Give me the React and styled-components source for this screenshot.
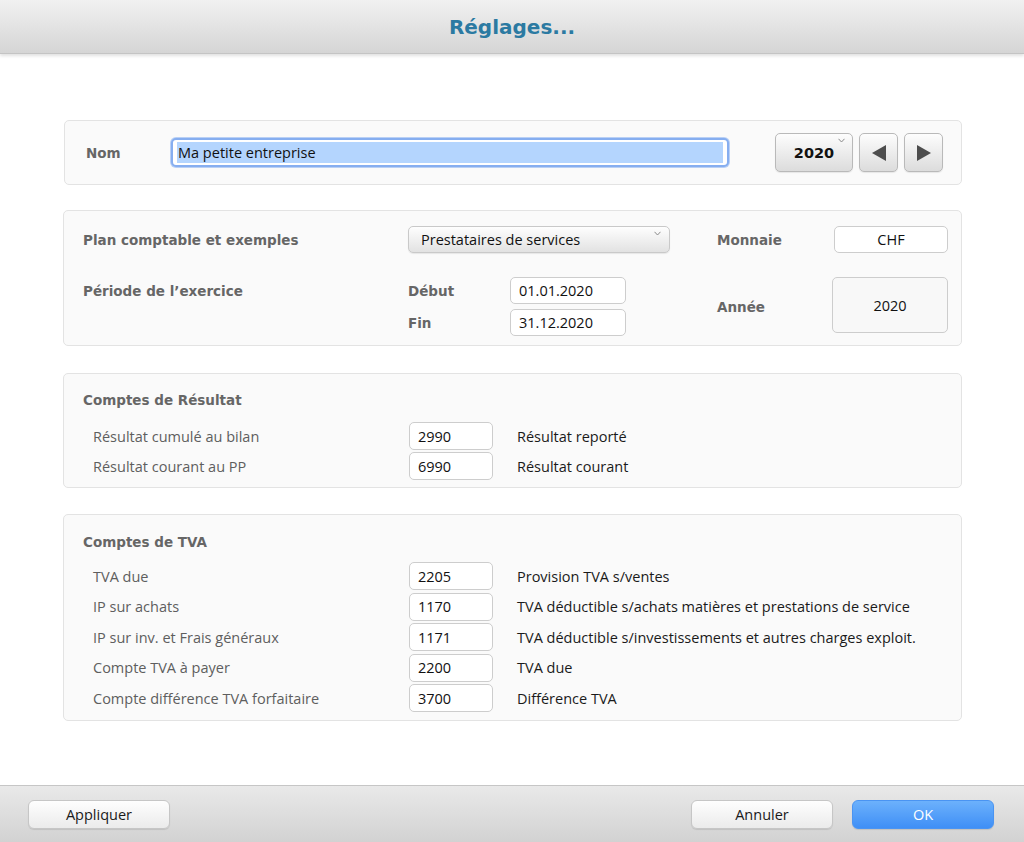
import React from "react";
import styled, { createGlobalStyle } from "styled-components";

const Global = createGlobalStyle`
  html, body { margin: 0; padding: 0; background: #ffffff; }
  body { font-family: "Open Sans", Lato, sans-serif; }
  * { box-sizing: border-box; }
`;

const Window = styled.div`
  width: 1024px;
  height: 842px;
  display: flex;
  flex-direction: column;
  background: #ffffff;
  overflow: hidden;
`;

const TitleBar = styled.header`
  height: 54px;
  flex: none;
  display: flex;
  align-items: center;
  justify-content: center;
  background: linear-gradient(#f1f1f1, #d5d5d5);
  border-bottom: 1px solid #c4c4c4;
  box-shadow: 0 2px 3px rgba(0, 0, 0, 0.12);
  position: relative;
  z-index: 1;
`;

const Title = styled.h1`
  margin: 0;
  font-family: "DejaVu Sans", Verdana, sans-serif;
  font-weight: bold;
  font-size: 20px;
  color: #2b7aa2;
`;

const Content = styled.main`
  flex: 1;
  padding: 66px 62px 0 63px;
  display: flex;
  flex-direction: column;
  gap: 25px;
`;

const Panel = styled.section`
  background: #fafafa;
  border: 1px solid #e3e3e3;
  border-radius: 5px;
  padding: ${(p) => p.$pad};
  width: ${(p) => p.$width || "899px"};
  margin-top: ${(p) => p.$mt || "0"};
  margin-left: ${(p) => p.$ml || "0"};
`;

const BoldLabel = styled.span`
  font-family: "DejaVu Sans", Verdana, sans-serif;
  font-weight: bold;
  font-size: 13.5px;
  color: #666666;
  white-space: nowrap;
`;

/* Panel 1 */
const NameRow = styled.div`
  display: flex;
  align-items: center;
  height: 63px;
`;

const NameLabel = styled(BoldLabel)`
  width: 85px;
`;

const NameField = styled.div`
  width: 558px;
  height: 29px;
  border: 2px solid #86aef0;
  border-radius: 5px;
  background: #ffffff;
  padding: 2px 4px;
  box-shadow: 0 0 0 1px #b9d0f5;
`;

const Selection = styled.div`
  height: 100%;
  background: #b4d5fe;
  font-size: 14.5px;
  color: #111;
  line-height: 21px;
  padding-left: 1px;
`;

const YearNav = styled.div`
  margin-left: auto;
  display: flex;
  gap: 6px;
`;

const BevelButton = styled.button`
  position: relative;
  height: 39px;
  width: ${(p) => p.$w}px;
  border: 1px solid #b9b9b9;
  border-radius: 5px;
  background: linear-gradient(#fdfdfd, #dcdcdc);
  box-shadow: 0 1px 1px rgba(0, 0, 0, 0.08);
  display: flex;
  align-items: center;
  justify-content: center;
  padding: 0;
  font-family: "DejaVu Sans", Verdana, sans-serif;
  font-weight: bold;
  font-size: 14.5px;
  color: #111;
`;

const SmallChevron = styled.span`
  position: absolute;
  top: 4px;
  right: ${(p) => p.$r || 8}px;
  width: 7px;
  height: 5px;
  svg { display: block; }
`;

const Chevron = ({ r }) => (
  <SmallChevron $r={r}>
    <svg width="7" height="5" viewBox="0 0 7 5">
      <path d="M0.5 0.8 L3.5 4 L6.5 0.8" fill="none" stroke="#8a8a8a" strokeWidth="1" />
    </svg>
  </SmallChevron>
);

const Triangle = ({ dir }) => (
  <svg width="16" height="18" viewBox="0 0 16 18">
    {dir === "left" ? (
      <path d="M15 1 L15 17 L1 9 Z" fill="#4d4d4d" />
    ) : (
      <path d="M1 1 L1 17 L15 9 Z" fill="#4d4d4d" />
    )}
  </svg>
);

/* Panel 2 */
const SetupGrid = styled.div`
  display: grid;
  grid-template-columns: 325px 102px 116px 91px 115px 116px;
  grid-template-rows: 46px 27px 27px;
  row-gap: 5px;
  align-items: center;
`;

const Cell = styled.div`
  grid-column: ${(p) => p.$col};
  grid-row: ${(p) => p.$row};
  align-self: ${(p) => p.$align || "center"};
  display: flex;
  align-items: center;
  justify-content: ${(p) => p.$justify || "flex-start"};
  height: ${(p) => (p.$h ? p.$h + "px" : "auto")};
`;

const Select = styled.div`
  position: relative;
  width: 262px;
  height: 27px;
  border: 1px solid #c9c9c9;
  border-radius: 5px;
  background: linear-gradient(#fefefe, #e2e2e2);
  box-shadow: 0 1px 1px rgba(0, 0, 0, 0.08);
  padding-left: 12px;
  display: flex;
  align-items: center;
  font-size: 14.5px;
  color: #111;
`;

const TextBox = styled.div`
  width: ${(p) => p.$w}px;
  height: ${(p) => p.$h || 27}px;
  border: 1px solid #cdcdcd;
  border-radius: 5px;
  background: ${(p) => p.$bg || "#ffffff"};
  display: flex;
  align-items: center;
  justify-content: ${(p) => (p.$center ? "center" : "flex-start")};
  padding-left: ${(p) => (p.$center ? 0 : 8)}px;
  font-size: 14.5px;
  color: #111;
`;

/* Account panels */
const PanelTitle = styled(BoldLabel)`
  display: block;
  line-height: 18px;
`;

const Rows = styled.div`
  display: flex;
  flex-direction: column;
  gap: ${(p) => p.$gap}px;
  margin-top: ${(p) => p.$mt}px;
`;

const AccountRow = styled.div`
  display: grid;
  grid-template-columns: 316px 84px 1fr;
  align-items: center;
  padding-left: 10px;
  height: 28px;
`;

const RowLabel = styled.span`
  font-size: 14.5px;
  color: #5e5e5e;
  white-space: nowrap;
`;

const RowDesc = styled.span`
  font-size: 14.5px;
  color: #1a1a1a;
  padding-left: 24px;
  white-space: nowrap;
`;

/* Footer */
const Footer = styled.footer`
  height: 57px;
  flex: none;
  display: flex;
  align-items: center;
  padding: 0 30px 0 28px;
  gap: 19px;
  background: linear-gradient(#e9e9e9, #d2d2d2);
  border-top: 1px solid #c6c6c6;
`;

const FooterButton = styled.button`
  width: 142px;
  height: 29px;
  border-radius: 6px;
  border: 1px solid ${(p) => (p.$primary ? "#4a94f2" : "#c6c6c6")};
  background: ${(p) =>
    p.$primary ? "linear-gradient(#6cb1fc, #3f8ff6)" : "linear-gradient(#fefefe, #ebebeb)"};
  color: ${(p) => (p.$primary ? "#ffffff" : "#1a1a1a")};
  font-family: "Open Sans", Lato, sans-serif;
  font-size: 14.5px;
  box-shadow: 0 1px 1px rgba(0, 0, 0, 0.1);
  margin-left: ${(p) => (p.$push ? "auto" : "0")};
  padding: 0;
`;

const resultRows = [
  ["Résultat cumulé au bilan", "2990", "Résultat reporté"],
  ["Résultat courant au PP", "6990", "Résultat courant"],
];

const tvaRows = [
  ["TVA due", "2205", "Provision TVA s/ventes"],
  ["IP sur achats", "1170", "TVA déductible s/achats matières et prestations de service"],
  ["IP sur inv. et Frais généraux", "1171", "TVA déductible s/investissements et autres charges exploit."],
  ["Compte TVA à payer", "2200", "TVA due"],
  ["Compte différence TVA forfaitaire", "3700", "Différence TVA"],
];

const AccountList = ({ rows, gap, mt }) => (
  <Rows $gap={gap} $mt={mt}>
    {rows.map(([label, num, desc]) => (
      <AccountRow key={label}>
        <RowLabel>{label}</RowLabel>
        <TextBox $w={84} $h={28}>{num}</TextBox>
        <RowDesc>{desc}</RowDesc>
      </AccountRow>
    ))}
  </Rows>
);

export default function App() {
  return (
    <>
      <Global />
      <Window>
        <TitleBar>
          <Title>Réglages...</Title>
        </TitleBar>
        <Content>
          <Panel $pad="0 18px 0 21px" $width="898px" $ml="1px">
            <NameRow>
              <NameLabel>Nom</NameLabel>
              <NameField>
                <Selection>Ma petite entreprise</Selection>
              </NameField>
              <YearNav>
                <BevelButton $w={78}>
                  2020
                  <Chevron r={7} />
                </BevelButton>
                <BevelButton $w={39}>
                  <Triangle dir="left" />
                </BevelButton>
                <BevelButton $w={39}>
                  <Triangle dir="right" />
                </BevelButton>
              </YearNav>
            </NameRow>
          </Panel>

          <Panel $pad="15px 13px 9px 19px">
            <SetupGrid>
              <Cell $col="1" $row="1" $align="start" $h={27}>
                <BoldLabel>Plan comptable et exemples</BoldLabel>
              </Cell>
              <Cell $col="2 / 5" $row="1" $align="start">
                <Select>
                  Prestataires de services
                  <Chevron r={8} />
                </Select>
              </Cell>
              <Cell $col="5" $row="1" $align="start" $h={27}>
                <BoldLabel>Monnaie</BoldLabel>
              </Cell>
              <Cell $col="6" $row="1" $align="start" $justify="flex-end">
                <TextBox $w={114} $center>CHF</TextBox>
              </Cell>

              <Cell $col="1" $row="2">
                <BoldLabel>Période de l’exercice</BoldLabel>
              </Cell>
              <Cell $col="2" $row="2">
                <BoldLabel>Début</BoldLabel>
              </Cell>
              <Cell $col="3" $row="2">
                <TextBox $w={116}>01.01.2020</TextBox>
              </Cell>
              <Cell $col="2" $row="3">
                <BoldLabel>Fin</BoldLabel>
              </Cell>
              <Cell $col="3" $row="3">
                <TextBox $w={116}>31.12.2020</TextBox>
              </Cell>
              <Cell $col="5" $row="2 / 4">
                <BoldLabel>Année</BoldLabel>
              </Cell>
              <Cell $col="6" $row="2 / 4" $align="start">
                <TextBox $w={116} $h={56} $bg="#f8f8f8" $center>2020</TextBox>
              </Cell>
            </SetupGrid>
          </Panel>

          <Panel $pad="17px 19px 7px 19px" $mt="2px">
            <PanelTitle>Comptes de Résultat</PanelTitle>
            <AccountList rows={resultRows} gap={2} mt={13} />
          </Panel>

          <Panel $pad="18px 19px 8px 19px" $mt="1px">
            <PanelTitle>Comptes de TVA</PanelTitle>
            <AccountList rows={tvaRows} gap={2.5} mt={11} />
          </Panel>
        </Content>
        <Footer>
          <FooterButton>Appliquer</FooterButton>
          <FooterButton $push>Annuler</FooterButton>
          <FooterButton $primary>OK</FooterButton>
        </Footer>
      </Window>
    </>
  );
}
